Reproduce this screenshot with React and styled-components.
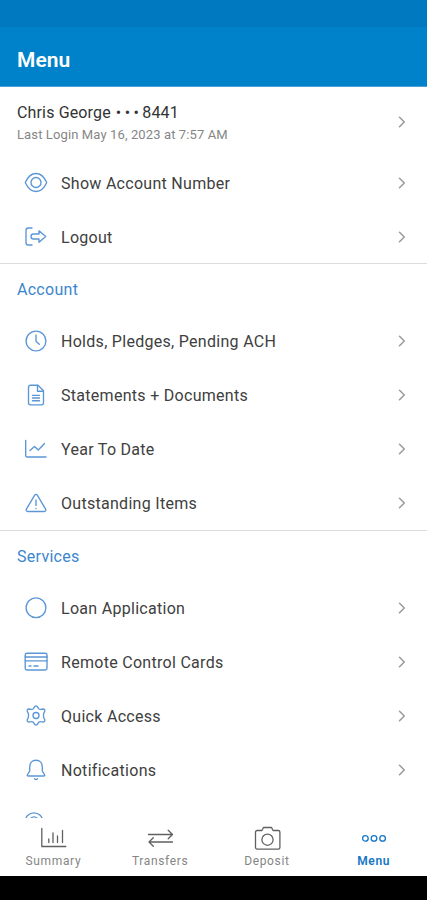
import React, { useState } from "react";
import styled, { createGlobalStyle } from "styled-components";

const GlobalStyle = createGlobalStyle`
  * {
    box-sizing: border-box;
  }
  body {
    margin: 0;
    background: #fff;
    font-family: Roboto, "Liberation Sans", sans-serif;
  }
`;

const Screen = styled.div`
  width: 427px;
  height: 900px;
  display: flex;
  flex-direction: column;
  overflow: hidden;
  background: #fff;
`;

const StatusBar = styled.div`
  height: 27px;
  flex-shrink: 0;
  background: #0079c1;
`;

const Header = styled.header`
  height: 60px;
  flex-shrink: 0;
  display: flex;
  align-items: center;
  padding: 7px 17px 0;
  background: #0082ca;
  border-bottom: 1px solid #4b9fd7;
`;

const Title = styled.h1`
  margin: 0;
  color: #fff;
  font-size: 21px;
  line-height: 26px;
  font-weight: 600;
  letter-spacing: 0;
`;

const Content = styled.main`
  flex: 1;
  min-height: 0;
  overflow: hidden;
`;

const Section = styled.section`
  border-bottom: ${(props) => (props.$last ? "none" : "1px solid #dcdcdc")};
`;

const ProfileSection = styled(Section)`
  height: 177px;
`;

const SectionTitle = styled.h2`
  margin: 0;
  height: 50px;
  padding: 0 17px;
  color: #3c86cd;
  font-size: 16px;
  line-height: 52px;
  font-weight: 400;
  letter-spacing: 0.28px;
`;

const Row = styled.div`
  height: ${(props) => props.$height || 54}px;
  display: flex;
  align-items: center;
  padding: 0 19px 0 24px;
  cursor: pointer;
`;

const ProfileRow = styled(Row)`
  padding-left: 17px;
`;

const Profile = styled.div`
  flex: 1;
  padding-top: 5px;
`;

const Name = styled.div`
  color: #333;
  font-size: 16px;
  line-height: 22px;
  letter-spacing: 0.15px;
`;

const Dots = styled.span`
  margin: 0 0 0 5px;
  letter-spacing: 3.4px;
`;

const LastLogin = styled.div`
  color: #868686;
  font-size: 13px;
  line-height: 22px;
  letter-spacing: 0.12px;
`;

const Label = styled.div`
  flex: 1;
  margin-left: 13px;
  padding-top: 1px;
  color: #404040;
  font-size: 16px;
  line-height: 20px;
  letter-spacing: 0.29px;
`;

const Icon = styled.svg`
  display: block;
  width: ${(props) => props.$size || 24}px;
  height: ${(props) => props.$size || 24}px;
  flex-shrink: 0;
  fill: none;
  stroke: ${(props) => props.$color || "#5b96d6"};
  stroke-width: ${(props) => props.$stroke || 1.35};
  stroke-linecap: round;
  stroke-linejoin: round;
`;

const TabBar = styled.nav`
  height: 58px;
  flex-shrink: 0;
  display: grid;
  grid-template-columns: repeat(4, 1fr);
  background: #fff;
`;

const Tab = styled.button`
  display: flex;
  flex-direction: column;
  align-items: center;
  padding: 6px 0 0;
  border: none;
  background: transparent;
  color: ${(props) => (props.$active ? "#1476c6" : "#858585")};
  font-family: inherit;
  font-size: 12px;
  line-height: 18px;
  font-weight: ${(props) => (props.$active ? 600 : 400)};
  letter-spacing: 0.65px;
  cursor: pointer;
`;

const TabIcon = styled(Icon)`
  width: 28px;
  height: 28px;
`;

const SystemBar = styled.div`
  height: 24px;
  flex-shrink: 0;
  background: #000;
`;

const icons = {
  eye: (
    <>
      <path d="M1.300 11.500C3.800 5.900 7.600 2.500 12 2.500S20.200 5.900 22.700 11.500C20.200 17.100 16.400 20.500 12 20.500S3.800 17.100 1.300 11.500Z" />
      <circle cx="12" cy="11.500" r="5" />
    </>
  ),
  logout: (
    <>
      <path d="M8 3H4.300a2.300 2.300 0 0 0-2.300 2.300v12.400a2.300 2.300 0 0 0 2.300 2.300H8" />
      <path d="M9.500 9H15V5.800L21.700 11.500 15 17.200v-3.200H9.500a2.500 2.500 0 0 1 0-5Z" />
    </>
  ),
  clock: (
    <>
      <circle cx="12" cy="12" r="9.900" />
      <path d="M12 6v6.200l3.300 3" />
    </>
  ),
  document: (
    <>
      <path d="M14 2.200H6.500a2 2 0 0 0-2 2v15.600a2 2 0 0 0 2 2h11a2 2 0 0 0 2-2V7.700Z" />
      <path d="M13.500 2.500v5.700h5.700M8.500 12.300h7M8.500 15h7M8.500 17.700h7" />
    </>
  ),
  chart: (
    <>
      <path d="M1.700 3.500v15.200a1.300 1.300 0 0 0 1.300 1.300h19" />
      <path d="m6 13.500 4.500-4 3.800 3.500 6.200-6.500" />
    </>
  ),
  warning: (
    <>
      <path d="M10.700 4.100 2.400 18.200a1.500 1.500 0 0 0 1.300 2.300h16.600a1.500 1.500 0 0 0 1.300-2.300L13.300 4.100a1.500 1.500 0 0 0-2.600 0Z" />
      <path d="M12 9v5.500M12 17.300v.3" />
    </>
  ),
  circle: <circle cx="12" cy="11.700" r="9.900" />,
  card: (
    <>
      <rect x="1.200" y="3.200" width="21.800" height="16.800" rx="1.800" />
      <path d="M1.200 7h21.800M1.200 10.800h21.800M5 16h2M10 16h4" />
    </>
  ),
  gear: (
    <>
      <path d="M10.600 2.700Q12 1.100 13.400 2.700L14.600 4.600Q15.500 5.700 16.900 5.300L19.200 5Q21.300 5.300 20.700 7.400L19.700 9.500Q19.100 11.500 19.700 13.500L20.700 15.600Q21.300 17.700 19.200 18L16.900 17.700Q15.500 17.300 14.600 18.400L13.400 20.300Q12 21.900 10.600 20.300L9.400 18.400Q8.500 17.300 7.100 17.700L4.800 18Q2.700 17.700 3.300 15.600L4.300 13.500Q4.900 11.500 4.300 9.500L3.300 7.400Q2.700 5.300 4.800 5L7.100 5.300Q8.500 5.700 9.400 4.600Z" />
      <circle cx="12" cy="11.500" r="3" />
    </>
  ),
  bell: (
    <>
      <path d="M12 2.200c-4 0-6.300 2.900-6.300 6.700v4.300L3.500 16.500c-.5.900-.1 1.500.9 1.500h15.200c1 0 1.400-.6.900-1.500l-2.200-3.300V8.900c0-3.800-2.300-6.700-6.300-6.700Z" />
      <path d="M10.500 20.800c.8.800 2.200.8 3 0" />
    </>
  ),
  help: (
    <>
      <circle cx="10" cy="9.500" r="8.700" />
      <circle cx="10" cy="9.500" r="4.700" />
    </>
  ),
};

const tabs = [
  {
    label: "Summary",
    icon: (
      <path d="M2.800 4.500v18h24M9.800 15v3.500M14 9v9.500M18.500 12v6.500M23.500 6.500v12" />
    ),
  },
  {
    label: "Transfers",
    icon: (
      <path d="M2.500 10.500h24M22.200 6.300l4.300 4.200-4.300 4.200M26.500 18H3M7.300 13.800 3 18l4.300 4.200" />
    ),
  },
  {
    label: "Deposit",
    icon: (
      <>
        <path d="M4.100 6.500h4.800l1.600-3h8l1.600 3h5.200a1.600 1.600 0 0 1 1.600 1.600v15.400a1.600 1.600 0 0 1-1.600 1.600H4.100a1.600 1.600 0 0 1-1.600-1.600V8.100a1.600 1.600 0 0 1 1.600-1.600Z" />
        <circle cx="14.500" cy="15.700" r="5.600" />
      </>
    ),
  },
  {
    label: "Menu",
    icon: (
      <>
        <circle cx="5.400" cy="14.400" r="2.800" />
        <circle cx="14" cy="14.400" r="2.800" />
        <circle cx="22.600" cy="14.400" r="2.800" />
      </>
    ),
  },
];

const accountItems = [
  { icon: "clock", label: "Holds, Pledges, Pending ACH" },
  { icon: "document", label: "Statements + Documents" },
  { icon: "chart", label: "Year To Date" },
  { icon: "warning", label: "Outstanding Items" },
];

const serviceItems = [
  { icon: "circle", label: "Loan Application" },
  { icon: "card", label: "Remote Control Cards" },
  { icon: "gear", label: "Quick Access" },
  { icon: "bell", label: "Notifications" },
  { icon: "help", label: "" },
];

function Chevron() {
  return (
    <Icon viewBox="0 0 12 12" $size={12} $color="#9c9c9c" $stroke={1.6}>
      <path d="M3.500 1.300 8.300 6 3.500 10.700" />
    </Icon>
  );
}

function MenuRow({ icon, label }) {
  return (
    <Row>
      <Icon viewBox="0 0 24 24">{icons[icon]}</Icon>
      <Label>{label}</Label>
      <Chevron />
    </Row>
  );
}

function App() {
  const [activeTab, setActiveTab] = useState("Menu");

  return (
    <>
      <GlobalStyle />
      <Screen>
        <StatusBar />
        <Header>
          <Title>Menu</Title>
        </Header>
        <Content>
          <ProfileSection>
            <ProfileRow $height={69}>
              <Profile>
                <Name>
                  Chris George<Dots>•••</Dots>8441
                </Name>
                <LastLogin>Last Login May 16, 2023 at 7:57 AM</LastLogin>
              </Profile>
              <Chevron />
            </ProfileRow>
            <MenuRow icon="eye" label="Show Account Number" />
            <MenuRow icon="logout" label="Logout" />
          </ProfileSection>
          <Section>
            <SectionTitle>Account</SectionTitle>
            {accountItems.map((item) => (
              <MenuRow key={item.icon} {...item} />
            ))}
          </Section>
          <Section $last>
            <SectionTitle>Services</SectionTitle>
            {serviceItems.map((item) => (
              <MenuRow key={item.icon} {...item} />
            ))}
          </Section>
        </Content>
        <TabBar>
          {tabs.map((tab) => (
            <Tab
              key={tab.label}
              $active={tab.label === activeTab}
              onClick={() => setActiveTab(tab.label)}
            >
              <TabIcon
                viewBox="0 0 28 28"
                $color={tab.label === activeTab ? "#1476c6" : "#606060"}
                $stroke={1.3}
              >
                {tab.icon}
              </TabIcon>
              {tab.label}
            </Tab>
          ))}
        </TabBar>
        <SystemBar />
      </Screen>
    </>
  );
}

export default App;
